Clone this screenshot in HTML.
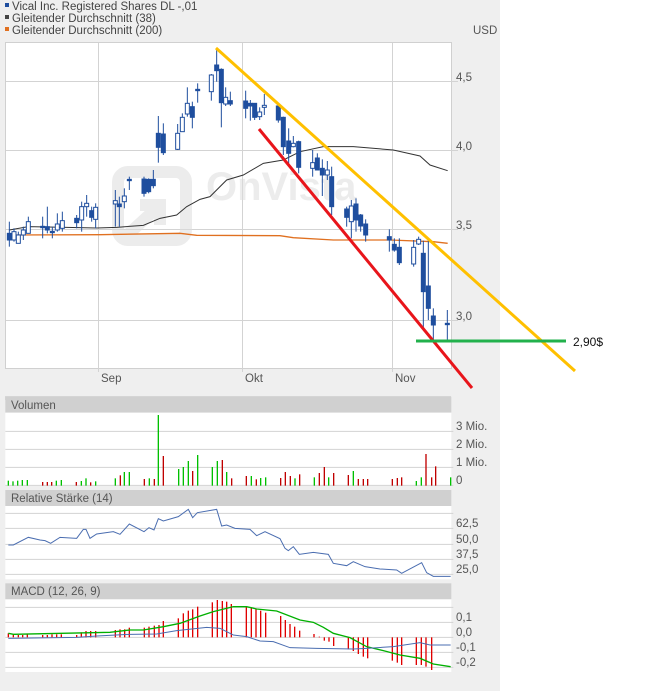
<!DOCTYPE html>
<html><head><meta charset="utf-8"><style>
html,body{margin:0;padding:0;background:#fff;}
body{width:670px;height:691px;position:relative;overflow:hidden;font-family:"Liberation Sans",sans-serif;}
#bg{position:absolute;left:0;top:0;width:500px;height:691px;background:#efefef;}
svg{position:absolute;left:0;top:0;}
text{font-family:"Liberation Sans",sans-serif;}
</style></head><body>
<div id="bg"></div>
<svg id="s" width="670" height="691" viewBox="0 0 670 691">
<rect x="5" y="3" width="4" height="4" fill="#1f4e9e"/>
<text x="12" y="10" font-size="11.5" fill="#444">Vical Inc. Registered Shares DL -,01</text>
<rect x="5" y="15" width="4" height="4" fill="#444"/>
<text x="12" y="22" font-size="11.5" fill="#444">Gleitender Durchschnitt (38)</text>
<rect x="5" y="27" width="4" height="4" fill="#e07020"/>
<text x="12" y="34" font-size="11.5" fill="#444">Gleitender Durchschnitt (200)</text>
<text x="473" y="34" font-size="11.5" fill="#555">USD</text>
<!-- main panel -->
<rect x="5.5" y="42.5" width="446" height="326" fill="#fff" stroke="#d0d0d0"/>
<g stroke="#d3d3d3" stroke-width="1">
<line x1="6" y1="81.5" x2="458" y2="81.5"/><line x1="6" y1="150.5" x2="458" y2="150.5"/>
<line x1="6" y1="229.5" x2="458" y2="229.5"/><line x1="6" y1="320.5" x2="458" y2="320.5"/>
<line x1="98.5" y1="43" x2="98.5" y2="372"/><line x1="242.5" y1="43" x2="242.5" y2="372"/><line x1="392.5" y1="43" x2="392.5" y2="372"/>
</g>
<g font-size="11.5" fill="#555">
<text x="456" y="81">4,5</text><text x="456" y="150">4,0</text><text x="456" y="229">3,5</text><text x="456" y="320">3,0</text>
<text x="101" y="382">Sep</text><text x="245" y="382">Okt</text><text x="395" y="382">Nov</text>
</g>
<!-- watermark -->
<g opacity="0.55">
<rect x="118" y="172" width="68" height="68" rx="10" fill="none" stroke="#ddd" stroke-width="12"/>
<path d="M122 240 L160 205 M140 205 L160 205 L160 225" stroke="#ddd" stroke-width="12" fill="none"/>
<text x="206" y="200" font-size="40" font-weight="bold" fill="#ddd">OnVista</text>
</g>
<g id="main" transform="scale(0.33333)"></g>
<rect x="5" y="396" width="446" height="4" fill="#d8d8d8"/>
<!-- lower panels -->
<g transform="translate(0,390) scale(0.33333)" id="low">
<rect x="16" y="20" width="1338" height="48" fill="#d0d0d0"/>
<rect x="16" y="68" width="1338" height="220" fill="#fff"/>
<rect x="16" y="300" width="1338" height="48" fill="#d0d0d0"/>
<rect x="16" y="348" width="1338" height="220" fill="#fff"/>
<rect x="16" y="580" width="1338" height="48" fill="#d0d0d0"/>
<rect x="16" y="628" width="1338" height="218" fill="#fff"/>
<g stroke="#d3d3d3" stroke-width="3">
<line x1="16" y1="124" x2="1360" y2="124"/><line x1="16" y1="178" x2="1360" y2="178"/><line x1="16" y1="232" x2="1360" y2="232"/><line x1="16" y1="286" x2="1360" y2="286"/>
<line x1="16" y1="370" x2="1360" y2="370"/><line x1="16" y1="415" x2="1360" y2="415"/><line x1="16" y1="463" x2="1360" y2="463"/><line x1="16" y1="508" x2="1360" y2="508"/><line x1="16" y1="553" x2="1360" y2="553"/>
<line x1="16" y1="652" x2="1360" y2="652"/><line x1="16" y1="697" x2="1360" y2="697"/><line x1="16" y1="742" x2="1360" y2="742"/><line x1="16" y1="787" x2="1360" y2="787"/><line x1="16" y1="832" x2="1360" y2="832"/>
</g>
</g>
<g font-size="11.5" fill="#555">
<text x="11" y="409">Volumen</text>
<text x="11" y="502">Relative Stärke (14)</text>
<text x="11" y="595">MACD (12, 26, 9)</text>
<text x="456" y="430">3 Mio.</text><text x="456" y="448">2 Mio.</text><text x="456" y="466">1 Mio.</text><text x="456" y="484">0</text>
<text x="456" y="527">62,5</text><text x="456" y="543">50,0</text><text x="456" y="558">37,5</text><text x="456" y="573">25,0</text>
<text x="456" y="621">0,1</text><text x="456" y="636">0,0</text><text x="456" y="651">-0,1</text><text x="456" y="666">-0,2</text>
</g>
<g id="low2" transform="translate(0,390) scale(0.33333)"></g>
<!-- trend lines -->
<line x1="216" y1="48" x2="575" y2="371" stroke="#ffc000" stroke-width="3"/>
<line x1="259" y1="129" x2="472" y2="388" stroke="#e8151b" stroke-width="3"/>
<line x1="416" y1="341" x2="566" y2="341" stroke="#22b14c" stroke-width="3"/>
<text x="573" y="346" font-size="12" fill="#111">2,90$</text>
</svg>
<script>
var NS="http://www.w3.org/2000/svg";
function el(p,t,a){var e=document.createElementNS(NS,t);for(var k in a)e.setAttribute(k,a[k]);p.appendChild(e);return e;}
var m=document.getElementById('main');
el(m,'polyline',{points:"28,690 85,680 200,682 290,684 350,682 430,676 480,655 530,645 560,620 600,598 630,590 680,540 730,525 790,490 850,480 900,455 970,440 1060,440 1180,450 1260,468 1290,495 1343,512",fill:"none",stroke:"#333","stroke-width":3});
el(m,'polyline',{points:"28,705 300,704 540,700 590,706 840,707 880,713 1000,720 1170,720 1300,725 1343,730",fill:"none",stroke:"#e07020","stroke-width":4});
var C=[[28,665,740,700,720,1],[42,685,725,695,720,0],[55,695,730,705,730,0],[70,680,720,690,705,0],[85,650,700,665,700,0],[128,650,715,679,683,1],[142,620,700,680,690,1],[157,680,715,694,698,1],[172,640,695,672,690,0],[187,635,695,662,685,0],[230,645,685,655,668,1],[245,605,695,620,660,0],[260,585,650,610,620,0],[275,620,665,632,652,1],[287,610,685,622,658,0],[346,570,680,602,612,0],[358,590,680,612,620,1],[373,565,625,588,605,0],[388,530,570,538,542,1],[432,530,590,537,580,1],[446,535,580,538,575,1],[460,510,565,538,557,1],[475,348,488,400,442,1],[490,370,465,402,458,1],[533,372,450,400,448,0],[547,340,395,352,395,0],[562,262,350,310,342,0],[577,305,385,320,352,1],[593,250,308,268,272,1],[634,222,302,225,275,0],[650,150,245,195,212,1],[664,205,382,208,308,1],[677,262,318,292,312,0],[691,275,318,302,312,1],[737,272,355,303,325,1],[751,300,362,310,318,1],[764,310,360,310,352,1],[779,322,360,336,350,0],[793,282,345,316,322,0],[835,312,368,318,360,1],[850,350,465,352,440,1],[866,385,490,423,460,1],[880,408,442,430,440,0],[896,422,520,425,502,1],[938,450,530,488,505,0],[952,460,510,474,510,1],[967,478,588,505,525,1],[982,483,540,510,525,0],[995,500,645,530,620,1],[1040,620,680,627,652,1],[1054,600,715,618,665,0],[1068,595,695,612,660,1],[1082,642,695,645,678,1],[1097,658,725,672,705,1],[1168,688,755,710,720,1],[1183,715,755,733,750,1],[1198,715,795,742,788,1],[1241,720,800,742,792,0],[1256,710,735,718,732,0],[1270,722,985,760,875,1],[1285,720,960,858,925,1],[1300,925,1020,948,975,1],[1342,930,1020,970,974,1]];
C.forEach(function(c){el(m,'line',{x1:c[0],y1:c[1],x2:c[0],y2:c[2],stroke:"#1f4e9e","stroke-width":3});
el(m,'rect',{x:c[0]-6,y:c[3],width:12,height:Math.max(3,c[4]-c[3]),fill:c[5]?"#1f4e9e":"#fff",stroke:"#1f4e9e","stroke-width":3});});
var l=document.getElementById('low2');
var G=[[25,272],[39,274],[53,272],[67,270],[82,270],[169,272],[184,270],[244,273],[258,265],[287,274],[346,265],[373,246],[388,246],[448,265],[475,75],[536,237],[550,231],[565,213],[593,195],[637,231],[652,213],[680,246],[754,258],[782,264],[797,262],[885,265],[943,262],[986,262],[1060,243],[1249,273],[1264,262],[1352,262]];
var R=[[128,276],[142,276],[155,276],[229,276],[272,277],[361,256],[433,267],[463,267],[490,198],[578,243],[667,210],[695,265],[739,258],[769,268],[842,264],[856,246],[871,258],[899,253],[958,249],[973,231],[1001,249],[1045,255],[1075,267],[1090,267],[1103,267],[1177,267],[1192,264],[1205,262],[1278,192],[1295,262],[1307,229]];
G.forEach(function(b){el(l,'line',{x1:b[0],y1:287,x2:b[0],y2:b[1],stroke:"#00c000","stroke-width":4});});
R.forEach(function(b){el(l,'line',{x1:b[0],y1:287,x2:b[0],y2:b[1],stroke:"#c00000","stroke-width":4});});
el(l,'polyline',{points:"25,465 40,465 85,442 120,450 135,452 152,460 180,442 230,445 250,418 258,418 270,445 290,432 340,425 360,433 388,402 432,425 447,413 462,420 475,386 490,393 535,380 565,358 578,383 592,368 650,358 665,408 680,405 705,415 750,418 770,437 795,425 840,446 855,475 865,482 880,470 898,493 940,487 985,493 1000,520 1040,527 1060,515 1095,530 1140,537 1190,540 1205,550 1265,518 1280,548 1300,559 1352,559",fill:"none",stroke:"#4a6db0","stroke-width":3});
var H=[[25,730],[40,735],[55,735],[68,735],[82,732],[128,735],[142,735],[156,733],[170,733],[184,733],[230,735],[244,727],[258,723],[272,723],[287,723],[346,720],[360,718],[374,718],[388,713],[433,713],[447,710],[463,707],[477,705],[490,693],[535,685],[550,670],[565,662],[578,658],[593,650],[637,637],[652,630],[667,633],[680,635],[694,642],[739,650],[754,652],[768,657],[782,662],[797,668],[842,678],[856,690],[870,702],[884,710],[899,722],[942,732],[958,740],[973,752],[987,755],[1001,768],[1045,778],[1060,783],[1075,792],[1090,800],[1103,805],[1177,812],[1192,818],[1205,825],[1249,825],[1264,825],[1278,830],[1295,840]];
H.forEach(function(b){el(l,'line',{x1:b[0],y1:742,x2:b[0],y2:b[1],stroke:"#e00000","stroke-width":4});});
el(l,'polyline',{points:"25,730 40,733 330,727 390,720 430,720 490,710 540,700 600,678 640,665 700,650 740,650 770,657 830,663 900,690 940,697 970,712 1000,730 1050,743 1100,770 1150,782 1200,795 1260,805 1300,822 1352,830",fill:"none",stroke:"#00b000","stroke-width":4});
el(l,'polyline',{points:"25,745 230,742 290,738 390,733 470,732 530,722 620,712 660,715 700,735 740,740 780,753 820,755 870,773 950,775 1060,777 1100,775 1180,770 1260,758 1290,765 1352,765",fill:"none",stroke:"#4a6db0","stroke-width":3});
</script>
</body></html>
